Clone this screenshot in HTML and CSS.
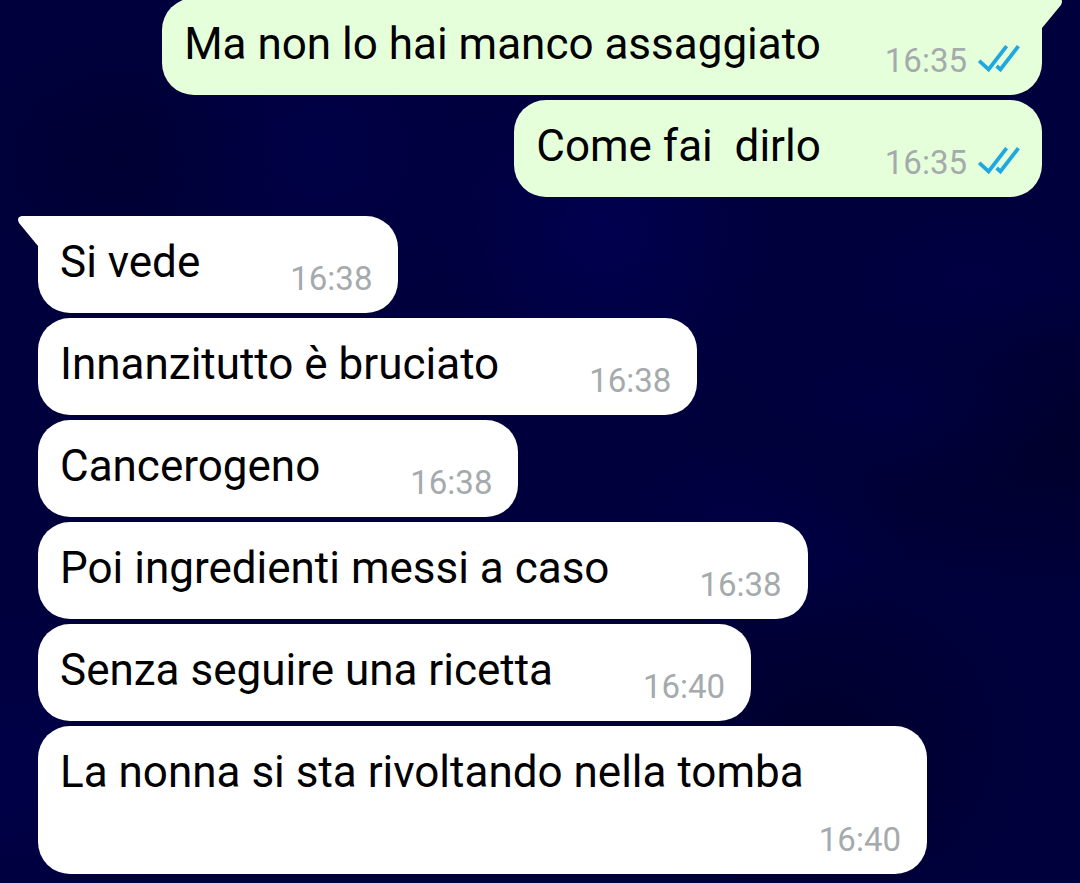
FILE: index.html
```html
<!DOCTYPE html>
<html lang="it">
<head>
  <meta charset="UTF-8">
  <meta name="viewport" content="width=device-width, initial-scale=1.0">
  <title>Chat</title>
  <link rel="stylesheet" href="styles.css">
</head>
<body>
  <!-- Shared double tick -->
  <svg class="sprite" aria-hidden="true">
    <symbol id="ticks" viewBox="0 0 42 34">
      <path d="M1.2 16.8 L10.6 25.4 L28.6 2.2 M18.6 22 L22.4 25.4 L40.4 2.2" fill="none" stroke="#1fa8e0" stroke-width="3.8"/>
    </symbol>
  </svg>

  <main class="chat">
    <div class="group group-out">
      <div class="message out first">
        <svg class="tail" viewBox="0 0 20 31" aria-hidden="true"><path d="M0 0 H16 Q22 1 19 7 L0 30 Z"/></svg>
        <p class="text">Ma non lo hai manco assaggiato</p>
        <div class="meta">
          <time datetime="16:35">16:35</time>
          <svg class="ticks" role="img" aria-label="Letto"><use href="#ticks"/></svg>
        </div>
      </div>
      <div class="message out">
        <p class="text">Come fai  dirlo</p>
        <div class="meta">
          <time datetime="16:35">16:35</time>
          <svg class="ticks" role="img" aria-label="Letto"><use href="#ticks"/></svg>
        </div>
      </div>
    </div>

    <div class="group group-in">
      <div class="message in first">
        <svg class="tail" viewBox="0 0 20 31" aria-hidden="true"><path d="M20 0 H4 Q-2 1 1 7 L20 30 Z"/></svg>
        <p class="text">Si vede</p>
        <div class="meta"><time datetime="16:38">16:38</time></div>
      </div>
      <div class="message in">
        <p class="text">Innanzitutto è bruciato</p>
        <div class="meta"><time datetime="16:38">16:38</time></div>
      </div>
      <div class="message in">
        <p class="text">Cancerogeno</p>
        <div class="meta"><time datetime="16:38">16:38</time></div>
      </div>
      <div class="message in">
        <p class="text">Poi ingredienti messi a caso</p>
        <div class="meta"><time datetime="16:38">16:38</time></div>
      </div>
      <div class="message in">
        <p class="text">Senza seguire una ricetta</p>
        <div class="meta"><time datetime="16:40">16:40</time></div>
      </div>
      <div class="message in">
        <p class="text">La nonna si sta rivoltando nella tomba</p>
        <div class="meta"><time datetime="16:40">16:40</time></div>
      </div>
    </div>
  </main>
</body>
</html>
```
FILE: styles.css
```css
* {
  margin: 0;
  padding: 0;
  box-sizing: border-box;
}

body {
  min-height: 100vh;
  font-family: Roboto, "Noto Sans", sans-serif;
  color: #000;
  background-color: #00003c;
  background-image:
    radial-gradient(ellipse at 56% 26%, rgba(0, 0, 92, 0.6), transparent 20%),
    radial-gradient(ellipse at 30% 17%, rgba(0, 0, 80, 0.5), transparent 18%),
    radial-gradient(ellipse at 83% 46%, rgba(0, 0, 84, 0.4), transparent 14%),
    radial-gradient(ellipse at 70% 61%, rgba(0, 0, 84, 0.4), transparent 14%),
    radial-gradient(ellipse at 90% 32%, rgba(0, 0, 84, 0.3), transparent 10%),
    radial-gradient(ellipse at 12% 18%, rgba(0, 0, 40, 0.5), transparent 12%),
    radial-gradient(ellipse at 100% 50%, rgba(0, 0, 32, 0.6), transparent 26%),
    radial-gradient(ellipse at 76% 84%, rgba(0, 0, 28, 0.5), transparent 18%),
    radial-gradient(ellipse at 0% 87%, rgba(0, 0, 84, 0.5), transparent 16%);
}

.sprite {
  display: none;
}

.chat {
  display: flex;
  flex-direction: column;
  gap: 19px;
  margin-top: -2px;
  padding: 0 38px 9px;
  overflow: hidden;
}

.group {
  display: flex;
  flex-direction: column;
  align-items: flex-start;
  gap: 5px;
}

.group-out {
  align-items: flex-end;
}

/* Message bubbles */
.message {
  position: relative;
  display: flex;
  flex-wrap: wrap;
  max-width: calc(100% - 115px);
  padding: 21px 26px 15px 22px;
  border-radius: 32px;
  column-gap: 90px;
}

.in {
  background-color: #fff;
  fill: #fff;
}

.out {
  background-color: #e5ffdb;
  fill: #e5ffdb;
  padding-right: 22px;
  column-gap: 64px;
}

.in.first {
  border-top-left-radius: 0;
}

.out.first {
  border-top-right-radius: 0;
}

.tail {
  position: absolute;
  top: 0;
  width: 20px;
  height: 31px;
}

.in .tail {
  right: 100%;
}

.out .tail {
  left: 100%;
}

.text {
  font-size: 44px;
  line-height: 51px;
  white-space: pre-wrap;
}

.meta {
  display: flex;
  align-items: center;
  gap: 11px;
  margin-left: auto;
  padding-top: 22px;
  font-size: 33px;
  line-height: 39px;
  color: #a5aaac;
}

.ticks {
  width: 42px;
  height: 34px;
}
```
